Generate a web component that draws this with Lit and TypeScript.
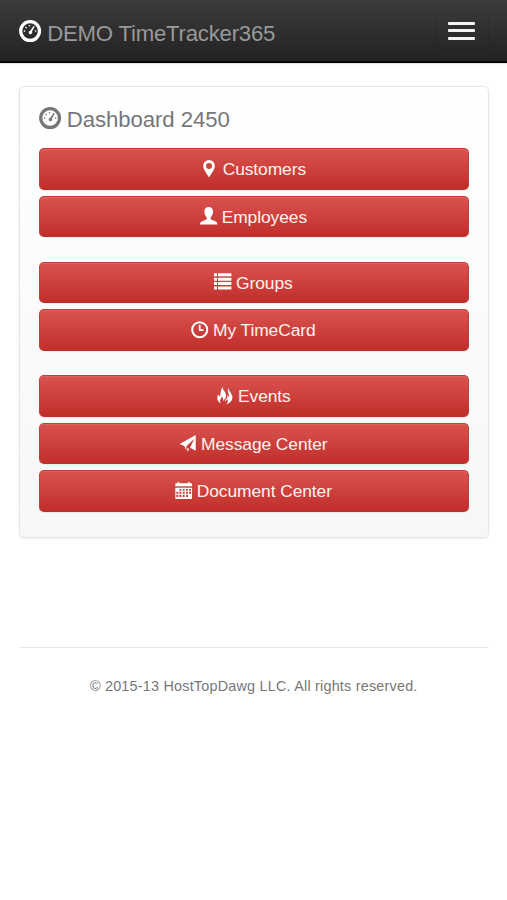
import { LitElement, html, svg, css, nothing } from "lit";
import { customElement, property } from "lit/decorators.js";

// Glyphs share a 52 unit square and paint in the current text colour.
const glyphs: Record<string, unknown> = {
  gauge: svg`
    <circle cx="26" cy="26" r="22" fill="none" stroke="currentColor" stroke-width="7.6"/>
    <circle cx="13" cy="26" r="1.900"/><circle cx="16.500" cy="18" r="1.900"/>
    <circle cx="24.500" cy="13.500" r="1.900"/><circle cx="39" cy="26" r="1.900"/>
    <path d="M34.500 13.500l2.500 1.500-6.500 12a4.200 4.200 0 1 1-4.200-2z"/>`,
  pin: svg`<path fill-rule="evenodd" d="M27 0a17.500 17.500 0 0 1 17.500 17.500C44.500 28 34 41 27 52 20 41 9.500 28 9.500 17.500A17.500 17.500 0 0 1 27 0zm0 9a9 9 0 1 0 0 18 9 9 0 0 0 0-18z"/>`,
  user: svg`<path d="M26 0c8.500 0 13 5.500 13 13.500 0 7-3 13-7 17.500v4c0 2 2 3 5 4.200l10 4.300c3 1.300 5 3.500 5 8.500H0c0-5 2-7.200 5-8.500l10-4.300c3-1.200 5-2.200 5-4.200v-4c-4-4.500-7-10.500-7-17.500C13 5.500 17.500 0 26 0z"/>`,
  list: svg`<path d="M0 1h9v9H0zM12 1h40v9H12zM0 14h9v9H0zM12 14h40v9H12zM0 27h9v9H0zM12 27h40v9H12zM0 40h9v9H0zM12 40h40v9H12z"/>`,
  clock: svg`
    <circle cx="26" cy="26" r="22.500" fill="none" stroke="currentColor" stroke-width="6"/>
    <path d="M23.500 11h5v14h9v5h-14z"/>`,
  fire: svg`
    <path d="M20 0c-1 9 9 14 10 24 1 8-4 13-9 18 1-5 0-10-4-14 0 7-5 8-5 14 0 3 1 5 2 7C7 45 3 39 4 31c0-4 1-7 3-10 0 4 1 6 4 7 5-7 1-18 9-28z"/>
    <path d="M37 2c-1 8 10 15 12 26 1 11-6 21-18 24 4-5 6-11 3-16-2 4-4 6-9 7 6-6 10-11 9-18 2 1 4 3 5 6 2-9-7-18-2-29z"/>`,
  plane: svg`<path d="M50 0v47L33 38 46 11 22 34v12l-6-13L2 27zM25 39l6 3-6 8z"/>`,
  calendar: svg`<path fill-rule="evenodd" d="M8 0h5v4h26V0h5v4h5a2 2 0 0 1 2 2v7H1V6a2 2 0 0 1 2-2h5zM1 17h50v32a2 2 0 0 1-2 2H3a2 2 0 0 1-2-2zm12 4v5h6v-5zm10 0v5h6v-5zm10 0v5h6v-5zm9 0v5h6v-5zM4 29v6h6v-6zm9 0v6h6v-6zm10 0v6h6v-6zm10 0v6h6v-6zm9 0v6h6v-6zM4 38v7h6v-7zm9 0v7h6v-7zm10 0v7h6v-7zm10 0v7h6v-7z"/>`,
};

@customElement("glyph-icon")
class GlyphIcon extends LitElement {
  @property() name = "";

  static styles = css`
    :host { display: block; flex: none; width: 1em; height: 1em; }
    svg { display: block; width: 100%; height: 100%; fill: currentColor; overflow: visible; }
  `;

  render() {
    return html`<svg viewBox="0 0 52 52" aria-hidden="true">${glyphs[this.name] ?? nothing}</svg>`;
  }
}

const groups = [
  [
    { icon: "pin", label: "Customers" },
    { icon: "user", label: "Employees" },
  ],
  [
    { icon: "list", label: "Groups" },
    { icon: "clock", label: "My TimeCard" },
  ],
  [
    { icon: "fire", label: "Events" },
    { icon: "plane", label: "Message Center" },
    { icon: "calendar", label: "Document Center" },
  ],
];

@customElement("app-root")
class AppRoot extends LitElement {
  static styles = css`
    :host {
      display: block;
      min-height: 100vh;
      background: #fff;
      color: #777;
      font-family: "Liberation Sans", Arial, sans-serif;
    }
    * { box-sizing: border-box; }
    .navbar {
      display: flex;
      align-items: flex-start;
      justify-content: space-between;
      height: 63px;
      padding: 0 18px 0 19px;
      background: linear-gradient(#3c3c3c, #222);
      border-bottom: 2px solid #060606;
      box-shadow: 0 1px 1px rgba(0, 0, 0, 0.12);
    }
    .brand, .title {
      display: flex;
      align-items: center;
      font-size: 22.2px;
      line-height: 26px;
      white-space: nowrap;
    }
    .brand { color: #999; margin-top: 21px; gap: 6px; letter-spacing: -0.22px; }
    .brand glyph-icon { color: #fff; margin-top: -6px; }
    .toggle {
      display: flex;
      flex-direction: column;
      align-items: center;
      gap: 4.4px;
      width: 54px;
      height: 43px;
      margin: 8px 0 0;
      padding: 13px 1px 0 0;
      border: 1px solid;
      border-color: transparent rgba(0, 0, 0, 0.07) rgba(0, 0, 0, 0.1);
      border-radius: 6px;
      background: none;
    }
    .bar { width: 27px; height: 3px; border-radius: 1px; background: #f4f4f4; flex: none; }
    .panel {
      margin: 23px 18.500px 0 19px;
      height: 452px;
      padding: 20px 18.500px 0 18.500px;
      border: 1px solid #e6e6e6;
      border-radius: 5px;
      background: linear-gradient(#fff, #f7f7f7);
      box-shadow: 0 1px 3px rgba(0, 0, 0, 0.07);
    }
    .title { margin-bottom: 15.3px; gap: 6px; letter-spacing: -0.07px; }
    .title glyph-icon { margin-top: -4px; }
    .groups { display: flex; flex-direction: column; gap: 24.6px; }
    .group { display: flex; flex-direction: column; gap: 6px; }
    .button {
      display: flex;
      align-items: center;
      justify-content: center;
      gap: 4.8px;
      width: 100%;
      height: 41.5px;
      padding: 0 1px 1px 0;
      border: 1px solid #be3f3c;
      border-bottom-color: #b33431;
      border-radius: 5px;
      background: linear-gradient(#d9534f, #c12e2a);
      box-shadow: inset 0 1px 0 rgba(255, 255, 255, 0.1), 0 1px 1px rgba(0, 0, 0, 0.06);
      color: #fff;
      font: 17.4px/20px "Liberation Sans", Arial, sans-serif;
      letter-spacing: -0.08px;
      white-space: nowrap;
    }
    .label { margin-top: 1px; color: #fff3ef; }
    .footer {
      margin: 109px 18.500px 0 19px;
      padding-top: 28px;
      border-top: 1px solid #e8e8e8;
      font-size: 14.4px;
      line-height: 20px;
      letter-spacing: 0.21px;
      text-align: center;
      white-space: nowrap;
    }
  `;

  render() {
    return html`
      <header class="navbar">
        <div class="brand"><glyph-icon name="gauge"></glyph-icon><span>DEMO TimeTracker365</span></div>
        <button class="toggle" aria-label="Toggle navigation">
          <span class="bar"></span><span class="bar"></span><span class="bar"></span>
        </button>
      </header>
      <main class="panel">
        <div class="title"><glyph-icon name="gauge"></glyph-icon><span>Dashboard 2450</span></div>
        <div class="groups">
          ${groups.map(
            (items) => html`<div class="group">
              ${items.map(
                (item) => html`<button class="button">
                  <glyph-icon name=${item.icon}></glyph-icon><span class="label">${item.label}</span>
                </button>`
              )}
            </div>`
          )}
        </div>
      </main>
      <footer class="footer">© 2015-13 HostTopDawg LLC. All rights reserved.</footer>
    `;
  }
}
